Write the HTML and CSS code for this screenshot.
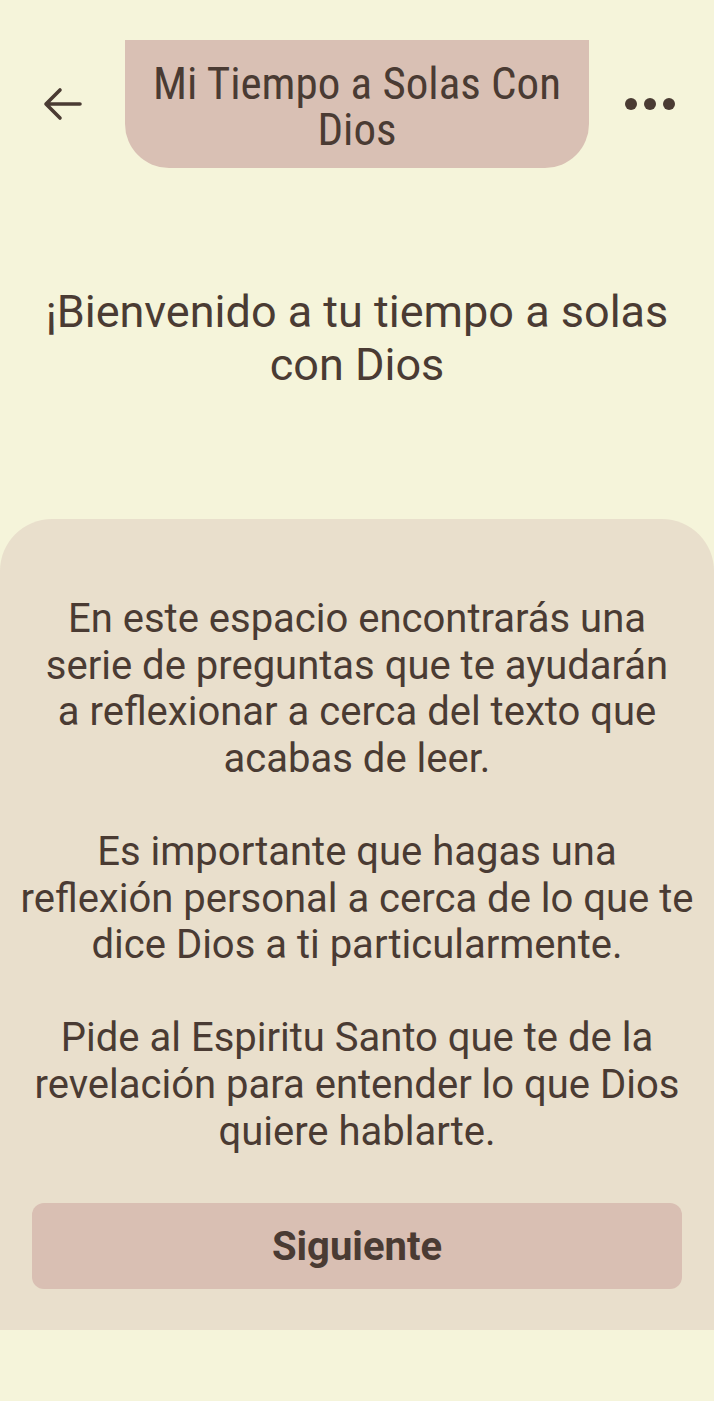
FILE: index.html
```html
<!DOCTYPE html>
<html lang="es">
<head>
<meta charset="utf-8">
<title>Mi Tiempo a Solas Con Dios</title>
<link rel="stylesheet" href="styles.css">
</head>
<body>
<div class="screen">
  <header class="topbar">
    <div class="back">
      <svg width="40" height="34" viewBox="0 0 40 34" aria-hidden="true">
        <path d="M38 17H4M18 3L4 17l14 14" fill="none" stroke="#4a3b33" stroke-width="3.6" stroke-linecap="round" stroke-linejoin="round"/>
      </svg>
    </div>
    <div class="title-pill">
      <h1 class="title">Mi Tiempo a Solas Con Dios</h1>
    </div>
    <div class="more">
      <span class="dot"></span><span class="dot"></span><span class="dot"></span>
    </div>
  </header>

  <h2 class="welcome">¡Bienvenido a tu tiempo a solas con Dios</h2>

  <section class="card">
    <div class="intro">
      <p>En este espacio encontrarás una serie de preguntas que te ayudarán <span class="nb">a reflexionar</span> a cerca del texto que acabas de leer.</p>
      <p>Es importante que hagas una reflexión personal a cerca de lo que te dice Dios a ti particularmente.</p>
      <p>Pide al Espiritu Santo que te de la revelación para entender lo que Dios quiere hablarte.</p>
    </div>
    <button class="next" type="button">Siguiente</button>
  </section>
</div>
</body>
</html>
```

FILE: styles.css
```css
* { box-sizing: border-box; }

html, body {
  margin: 0;
  padding: 0;
}

body {
  background: #f5f4da;
  font-family: Roboto, "Noto Sans", "Liberation Sans", sans-serif;
  color: #4a3b33;
  width: 714px;
  height: 1401px;
  overflow: hidden;
}

.screen {
  display: flex;
  flex-direction: column;
  min-height: 1401px;
}

.topbar {
  display: grid;
  grid-template-columns: 125px 464px 1fr;
  align-items: center;
  padding-top: 40px;
}

.back {
  display: flex;
  justify-content: flex-start;
  padding-left: 42px;
}

.back svg { display: block; }

.title-pill {
  background: #d9c0b4;
  height: 128px;
  border-radius: 0 0 44px 44px;
  display: flex;
  align-items: center;
  justify-content: center;
  padding: 6px 12px 0;
}

.title {
  margin: 0;
  font-family: "Roboto Condensed", "Liberation Sans Narrow", Roboto, sans-serif;
  font-weight: 400;
  font-size: 45px;
  line-height: 46px;
  text-align: center;
  color: #4a3b33;
}

.more {
  display: flex;
  justify-content: flex-start;
  gap: 7px;
  padding-left: 36px;
}

.dot {
  width: 12px;
  height: 12px;
  border-radius: 50%;
  background: #4a3b33;
}

.welcome {
  margin: 117px 0 0;
  padding: 0 30px;
  font-weight: 400;
  font-size: 45px;
  line-height: 53px;
  text-align: center;
  color: #4a3b33;
}

.card {
  margin-top: 128px;
  background: #e9dfcc;
  border-radius: 52px 52px 0 0;
  padding: 77px 32px 41px;
  display: flex;
  flex-direction: column;
}

.intro {
  margin: 0 -12px;
}

.intro p {
  margin: 0 0 46.6px;
  font-size: 40px;
  line-height: 46.6px;
  text-align: center;
  color: #4a3b33;
}

.intro p:last-child { margin-bottom: 0; }

.nb { white-space: nowrap; }

.next {
  margin-top: 48px;
  height: 86px;
  border: none;
  border-radius: 12px;
  background: #d9bfb3;
  font-family: Roboto, sans-serif;
  font-weight: 700;
  font-size: 40px;
  color: #4a3b33;
  cursor: pointer;
}
```
